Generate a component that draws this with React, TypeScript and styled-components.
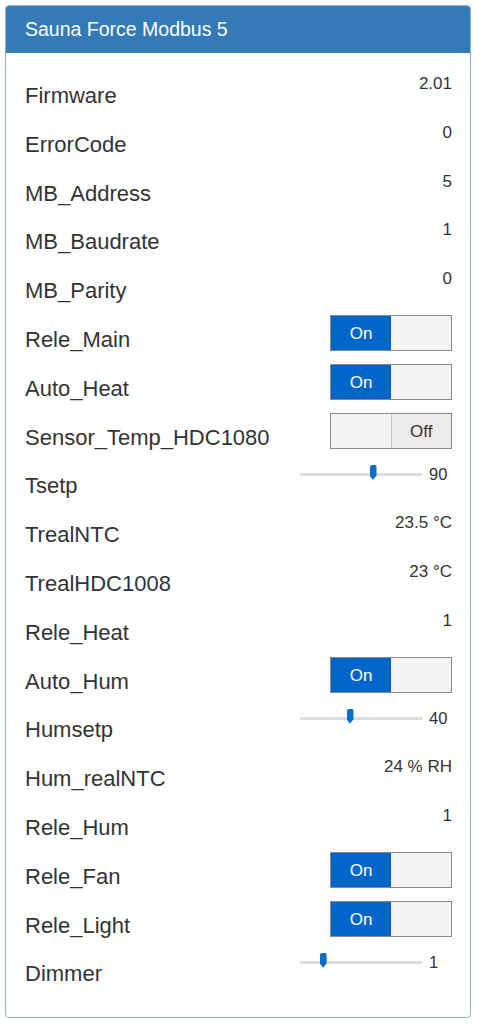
import React from 'react';
import styled, { createGlobalStyle } from 'styled-components';

const GlobalStyle = createGlobalStyle`
  html, body {
    margin: 0;
    padding: 0;
    background: #fff;
  }
  body {
    font-family: "Liberation Sans", Arial, Helvetica, sans-serif;
    color: #333;
  }
`;

type Item =
  | { kind: 'value'; label: string; value: string }
  | { kind: 'toggle'; label: string; on: boolean }
  | { kind: 'slider'; label: string; value: number; min: number; max: number };

const items: Item[] = [
  { kind: 'value', label: 'Firmware', value: '2.01' },
  { kind: 'value', label: 'ErrorCode', value: '0' },
  { kind: 'value', label: 'MB_Address', value: '5' },
  { kind: 'value', label: 'MB_Baudrate', value: '1' },
  { kind: 'value', label: 'MB_Parity', value: '0' },
  { kind: 'toggle', label: 'Rele_Main', on: true },
  { kind: 'toggle', label: 'Auto_Heat', on: true },
  { kind: 'toggle', label: 'Sensor_Temp_HDC1080', on: false },
  { kind: 'slider', label: 'Tsetp', value: 90, min: 0, max: 150 },
  { kind: 'value', label: 'TrealNTC', value: '23.5 °C' },
  { kind: 'value', label: 'TrealHDC1008', value: '23 °C' },
  { kind: 'value', label: 'Rele_Heat', value: '1' },
  { kind: 'toggle', label: 'Auto_Hum', on: true },
  { kind: 'slider', label: 'Humsetp', value: 40, min: 0, max: 100 },
  { kind: 'value', label: 'Hum_realNTC', value: '24 % RH' },
  { kind: 'value', label: 'Rele_Hum', value: '1' },
  { kind: 'toggle', label: 'Rele_Fan', on: true },
  { kind: 'toggle', label: 'Rele_Light', on: true },
  { kind: 'slider', label: 'Dimmer', value: 1, min: 0, max: 6 },
];

const Panel = styled.div`
  margin: 5px 6px 0 5px;
  border: 1px solid #8fb3d6;
  border-radius: 4px;
  overflow: hidden;
`;

const PanelHeading = styled.div`
  height: 47px;
  background: #337ab7;
  color: #fff;
  font-size: 19.5px;
  line-height: 46px;
  padding: 0 19px;
  box-sizing: border-box;
`;

const PanelBody = styled.div`
  padding: 15px 18px 22px 19px;
`;

const Row = styled.div`
  height: 48.8px;
  display: flex;
  justify-content: space-between;
  align-items: flex-start;
`;

const Label = styled.div`
  margin-top: 17px;
  font-size: 22px;
  line-height: 22px;
  white-space: nowrap;
`;

const Value = styled.div`
  margin-top: 6px;
  font-size: 17px;
  line-height: 20px;
  white-space: nowrap;
`;

const Switch = styled.div`
  margin-top: 3px;
  width: 122px;
  height: 36px;
  box-sizing: border-box;
  border: 1px solid #8a8a8a;
  display: flex;
`;

const SwitchHalf = styled.div<{ $active?: boolean; $divider?: boolean }>`
  flex: 1;
  display: flex;
  align-items: center;
  justify-content: center;
  padding-top: 2px;
  font-size: 17px;
  background: ${(p) => (p.$active ? '#0265c9' : '#f3f3f3')};
  color: ${(p) => (p.$active ? '#fff' : '#333')};
  border-left: ${(p) => (p.$divider ? '1px solid #c8c8c8' : 'none')};
`;

const OffHalf = styled(SwitchHalf)`
  background: #ececec;
`;

const SliderWrap = styled.div`
  margin-top: 6px;
  display: flex;
  align-items: center;
  gap: 6px;
  height: 20px;
`;

const Track = styled.div`
  position: relative;
  width: 123px;
  height: 3px;
  background: #dedede;
  border-radius: 2px;
`;

const Thumb = styled.div`
  position: absolute;
  top: -8px;
  width: 7px;
  height: 15px;
  margin-left: -3.5px;
  background: #0b6fc7;
  border-radius: 2px 2px 0 0;
  clip-path: polygon(0 0, 100% 0, 100% 70%, 50% 100%, 0 70%);
`;

const SliderValue = styled.div`
  width: 23px;
  font-size: 16.5px;
  line-height: 20px;
  text-align: left;
`;

function Toggle({ on }: { on: boolean }) {
  return on ? (
    <Switch>
      <SwitchHalf $active>On</SwitchHalf>
      <SwitchHalf />
    </Switch>
  ) : (
    <Switch>
      <SwitchHalf />
      <OffHalf $divider>Off</OffHalf>
    </Switch>
  );
}

function Slider({ value, min, max }: { value: number; min: number; max: number }) {
  // thumb travels inside the track, 4px from each end
  const frac = (value - min) / (max - min);
  return (
    <SliderWrap>
      <Track>
        <Thumb style={{ left: `calc(4px + ${frac} * (100% - 8px))` }} />
      </Track>
      <SliderValue>{value}</SliderValue>
    </SliderWrap>
  );
}

export default function App() {
  return (
    <>
      <GlobalStyle />
      <Panel>
        <PanelHeading>Sauna Force Modbus 5</PanelHeading>
        <PanelBody>
          {items.map((it) => (
            <Row key={it.label}>
              <Label>{it.label}</Label>
              {it.kind === 'value' && <Value>{it.value}</Value>}
              {it.kind === 'toggle' && <Toggle on={it.on} />}
              {it.kind === 'slider' && <Slider value={it.value} min={it.min} max={it.max} />}
            </Row>
          ))}
        </PanelBody>
      </Panel>
    </>
  );
}
